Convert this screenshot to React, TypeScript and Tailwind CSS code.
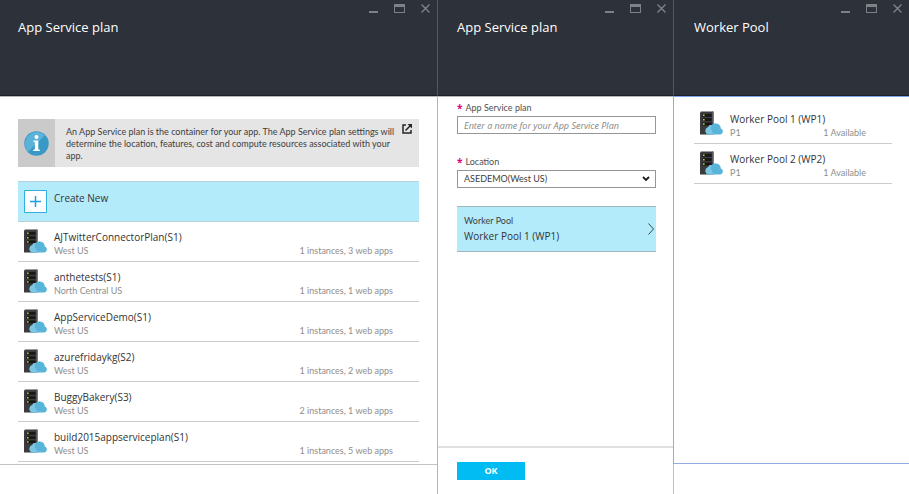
import type { ReactNode } from "react";

const plans = [
  { name: "AJTwitterConnectorPlan(S1)", region: "West US", usage: "1 instances, 3 web apps" },
  { name: "anthetests(S1)", region: "North Central US", usage: "1 instances, 1 web apps" },
  { name: "AppServiceDemo(S1)", region: "West US", usage: "1 instances, 1 web apps" },
  { name: "azurefridaykg(S2)", region: "West US", usage: "1 instances, 2 web apps" },
  { name: "BuggyBakery(S3)", region: "West US", usage: "2 instances, 1 web apps" },
  { name: "build2015appserviceplan(S1)", region: "West US", usage: "1 instances, 5 web apps" },
];

const pools = [
  { name: "Worker Pool 1 (WP1)", size: "P1", available: "1 Available" },
  { name: "Worker Pool 2 (WP2)", size: "P1", available: "1 Available" },
];

function WindowControls() {
  return (
    <div className="flex h-4 items-center justify-end gap-4 pr-[7px] text-[#7e8287]">
      <button type="button" aria-label="Minimize" className="h-4 w-[9px]">
        <svg viewBox="0 0 9 16" className="h-4 w-[9px]">
          <path d="M0 11h9v2H0z" fill="currentColor" />
        </svg>
      </button>
      <button type="button" aria-label="Maximize" className="h-4 w-[11px]">
        <svg viewBox="0 0 11 16" className="h-4 w-[11px]">
          <path d="M0 4h11v9H0z M1 7v5h9V7z" fill="currentColor" fillRule="evenodd" />
        </svg>
      </button>
      <button type="button" aria-label="Close" className="h-4 w-[9px]">
        <svg viewBox="0 0 9 16" className="h-4 w-[9px]">
          <path d="M.5 4.500l8 8M8.500 4.500l-8 8" stroke="currentColor" strokeWidth="1.400" fill="none" />
        </svg>
      </button>
    </div>
  );
}

type BladeProps = {
  title: string;
  titlePadding: string;
  headerLine: string;
  headerSide: string;
  children: ReactNode;
};

function Blade({ title, titlePadding, headerLine, headerSide, children }: BladeProps) {
  return (
    <section className="flex min-w-0 flex-col">
      <div className={`border-b ${headerLine}`}>
        <header className={`h-24 border-b border-b-[#1c1f28] bg-[#2d3139] ${headerSide}`}>
          <WindowControls />
          <h1 className={`pt-px text-[13px] leading-5 text-white ${titlePadding}`}>{title}</h1>
        </header>
      </div>
      {children}
    </section>
  );
}

function ServerIcon() {
  return (
    <svg viewBox="0 0 23 24" className="h-6 w-[23px] shrink-0" aria-hidden="true">
      <path d="M0 1.500L1 .5h12l.5.500v22.500H0z" fill="#3b3b3d" />
      <path d="M12 .5h1.500v12H12z" fill="#59595b" />
      <path d="M2.500 3h9v2.800h-9zM2.500 7.300h9v2.800h-9zM2.500 11.600h9v2.800h-9z" fill="#171718" />
      <path d="M3 3.500h1.600v1.600H3zM3 7.900h1.600v1.600H3zM3 12.200h1.600v1.600H3z" fill="#b8d432" />
      <path d="M8.500 23.500a3.700 3.700 0 0 1-.3-7.200 3.100 3.100 0 0 1 3.500-2.200 5.200 5.200 0 0 1 9.100 3.400 3.100 3.100 0 0 1-.7 6z" fill="#58b4d9" />
      <path d="M8.500 23.500a3.700 3.700 0 0 1-.3-7.200 3.100 3.100 0 0 1 3.500-2.200l-1 3.300 3 6.100z" fill="#7cc6e4" />
    </svg>
  );
}

function Row({ name, detail, note }: { name: string; detail: string; note: string }) {
  return (
    <li className="border-b border-[#cbcbcb]">
      <button type="button" className="flex h-[39px] w-full gap-[7px] pl-[6px] pt-[7px] text-left">
        <ServerIcon />
        <span className="flex min-w-0 flex-1 flex-col">
          <span className="text-[10px] leading-4 text-[#333]">{name}</span>
          <span className="flex justify-between pr-[26px] font-['Lato'] text-[9px] leading-3 text-[#8e8e8e]">
            <span>{detail}</span>
            <span>{note}</span>
          </span>
        </span>
      </button>
    </li>
  );
}

function Required({ htmlFor, children }: { htmlFor: string; children: string }) {
  return (
    <label htmlFor={htmlFor} className="flex h-4 gap-[3px] font-['Lato'] text-[9px] leading-4 text-[#505050]">
      <span className="font-['Open_Sans'] text-[10px] font-bold text-[#e3008c]">*</span>
      {children}
    </label>
  );
}

export default function App() {
  return (
    <main className="grid min-h-screen grid-cols-[438fr_235fr_236fr] bg-white font-['Open_Sans','Noto_Sans',sans-serif]">
      <Blade title="App Service plan" titlePadding="pl-[18px]" headerSide="border-r border-r-[#54575e]" headerLine="border-[#b4b6b8]">
        <div className="flex flex-1 flex-col border-r border-[#b5b5b5]">
          <div className="flex-1 border-b border-[#c4c4c4] px-[18px] pb-[2px] pt-[22px]">
            <div className="flex bg-[#e5e5e5]">
              <div className="flex w-[37px] shrink-0 items-center justify-center bg-[#cacaca]">
                <svg viewBox="0 0 25 25" className="size-[25px]" aria-hidden="true">
                  <circle cx="12.500" cy="12.500" r="12.200" fill="#3999c6" />
                  <path d="M3.900 21.100A12.200 12.200 0 0 1 21.100 3.900z" fill="#5cb3d9" />
                  <circle cx="12.500" cy="5.900" r="2" fill="#fff" />
                  <path d="M9.500 9.500h4.800v9h1.500V20H9.300v-1.500h1.600v-7.400H9.500z" fill="#fff" />
                </svg>
              </div>
              <p className="min-w-0 flex-1 pb-[5px] pl-[11px] pt-[7px] font-['Lato'] text-[9px] leading-3 text-[#404040]">
                An App Service plan is the container for your app. The App Service plan settings will determine the location, features, cost and compute resources associated with your app.
              </p>
              <a href="#details" aria-label="Open details" className="mr-[7px] mt-[5px] size-[10px] shrink-0 text-[#252525]">
                <svg viewBox="0 0 10 10" className="size-[10px]">
                  <path d="M4 1H1v8h8V6M3.500 6.500L8.500 1.500" stroke="currentColor" strokeWidth="1.500" fill="none" />
                  <path d="M5.500 0H10v4.500z" fill="currentColor" />
                </svg>
              </a>
            </div>
            <button type="button" className="mt-[14px] flex w-full gap-[7px] border-y border-[#b8d0d8] bg-[#b3ebfb] py-2 pl-[6px] text-left">
              <svg viewBox="0 0 23 23" className="size-[23px] shrink-0" aria-hidden="true">
                <path d="M.5.5h22v22H.5z" fill="#fff" stroke="#30afe3" />
                <path d="M11.500 6v11M6 11.500h11" stroke="#1ba1e2" strokeWidth="1.500" />
              </svg>
              <span className="text-[10px] leading-4 text-[#333]">Create New</span>
            </button>
            <ul>
              {plans.map((p) => (
                <Row key={p.name} name={p.name} detail={p.region} note={p.usage} />
              ))}
            </ul>
          </div>
          <footer className="h-[29px] shrink-0" />
        </div>
      </Blade>

      <Blade title="App Service plan" titlePadding="pl-[19px]" headerSide="" headerLine="border-[#b4b6b8]">
        <form className="flex flex-1 flex-col" onSubmit={(e) => e.preventDefault()}>
          <div className="flex-1 border-b-2 border-[#e0e0e0] pl-[19px] pr-[17px] pt-[3px]">
            <Required htmlFor="plan-name">App Service plan</Required>
            <input
              id="plan-name"
              type="text"
              placeholder="Enter a name for your App Service Plan"
              className="block h-[18px] w-full border border-[#969696] px-[6px] text-[9px] text-[#333] outline-none placeholder:italic placeholder:text-[#858585]"
            />
            <div className="mt-5">
              <Required htmlFor="location">Location</Required>
            </div>
            <div className="relative">
              <select
                id="location"
                defaultValue="ase"
                className="block h-[18px] w-full appearance-none border border-[#969696] bg-white px-[6px] font-['Lato'] text-[9px] leading-4 text-[#404040] outline-none"
              >
                <option value="ase">ASEDEMO(West US)</option>
              </select>
              <svg viewBox="0 0 8 6" className="pointer-events-none absolute right-[6px] top-[6px] h-[6px] w-2" aria-hidden="true">
                <path d="M1 1l3 3 3-3" stroke="#1e1e1e" strokeWidth="1.800" fill="none" />
              </svg>
            </div>
            <button type="button" className="mt-[18px] flex w-full items-center justify-between border-y border-[#a3b5bb] bg-[#b3ebfb] py-[7px] pl-[7px] pr-[2px] text-left text-[#333]">
              <span className="flex flex-col">
                <span className="font-['Lato'] text-[9px] leading-[14px] text-[#404040]">Worker Pool</span>
                <span className="text-[10px] leading-4">Worker Pool 1 (WP1)</span>
              </span>
              <svg viewBox="0 0 6 12" className="h-3 w-[6px]" aria-hidden="true">
                <path d="M.5.5L5.500 6l-5 5.500" stroke="#3d4a50" fill="none" />
              </svg>
            </button>
          </div>
          <footer className="h-[46px] shrink-0 pl-[19px] pt-[14px]">
            <button type="submit" className="block h-[18px] w-[68px] bg-[#00bcf2] text-[9px] font-bold leading-[18px] text-white">
              OK
            </button>
          </footer>
        </form>
      </Blade>

      <Blade title="Worker Pool" titlePadding="pl-5" headerSide="border-l border-l-[#54575e]" headerLine="border-[#7ea6ea]">
        <div className="flex-1 border-b border-l border-[#91abe3] pl-5 pr-[17px] pt-[7px]">
          <ul>
            {pools.map((p) => (
              <Row key={p.name} name={p.name} detail={p.size} note={p.available} />
            ))}
          </ul>
        </div>
        <footer className="h-[30px] shrink-0 border-l border-[#c0c0c0]" />
      </Blade>
    </main>
  );
}
